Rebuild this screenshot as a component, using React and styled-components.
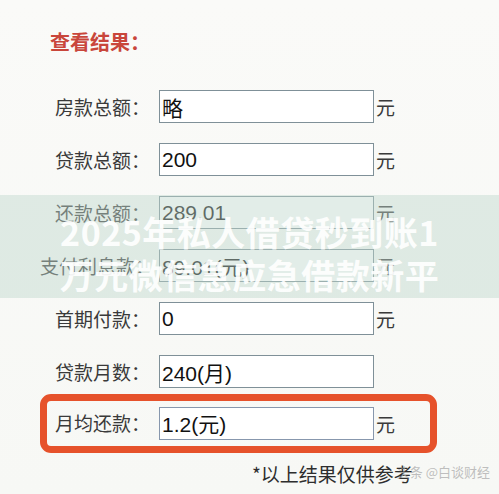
import React from "react";
import styled, { createGlobalStyle } from "styled-components";

const GlobalStyle = createGlobalStyle`
  html, body { margin: 0; padding: 0; background: #f8f8f6; }
  * { box-sizing: border-box; }
`;

const Page = styled.div`
  position: relative;
  width: 499px;
  height: 494px;
  overflow: hidden;
  background: linear-gradient(180deg, #fafaf8 0%, #f7f8f5 100%);
  font-family: "Noto Sans CJK SC", "Noto Sans", sans-serif;
  color: #333;
`;

const Title = styled.div`
  height: 80px;
  padding: 30px 0 0 50px;
  font-size: 20px;
  line-height: 24px;
  font-weight: 700;
  color: #c9463b;
`;

const Form = styled.div`
  display: flex;
  flex-direction: column;
`;

const Row = styled.div`
  display: flex;
  align-items: center;
  height: ${(p) => (p.$compact ? "45px" : "53px")};
  padding-left: ${(p) => (p.$compact ? "0px" : "40px")};
`;

const Label = styled.span`
  width: 119px;
  padding-right: 9px;
  text-align: right;
  font-size: 19px;
  line-height: 24px;
  color: #3a3a3a;
  white-space: nowrap;
`;

const Field = styled.div`
  width: 215px;
  height: 33px;
  border: 1.5px solid ${(p) => (p.$blue ? "#8797ad" : "#7f9098")};
  background: #fff;
  padding-left: 2px;
  display: flex;
  align-items: center;
  font-family: "Liberation Sans", "Noto Sans CJK SC", sans-serif;
  font-size: 21px;
  color: #111;
`;

const Unit = styled.span`
  margin-left: 2px;
  font-size: 19px;
  color: #3a3a3a;
`;

const Highlight = styled.div`
  margin: -4.5px 0 0 40px;
  width: 397px;
  height: 59px;
  border: 7px solid #e6522b;
  border-radius: 11px;
  display: flex;
  align-items: center;
`;

const Note = styled.div`
  margin: 9px 0 0 252px;
  font-size: 19px;
  line-height: 24px;
  color: #2e2e2e;
`;

const Band = styled.div`
  position: absolute;
  left: 0;
  right: 0;
  top: 195px;
  height: 103px;
  padding-top: 15px;
  background: rgba(190, 216, 205, 0.45);
  display: flex;
  flex-direction: column;
  align-items: center;
  color: rgba(255, 255, 255, 0.92);
  font-size: 34px;
  line-height: 43px;
  font-weight: 700;
  letter-spacing: 0.5px;
  pointer-events: none;
`;

const Mark = styled.div`
  position: absolute;
  right: 9px;
  top: 462px;
  font-size: 13px;
  color: rgba(175, 175, 175, 0.8);
`;

const rows = [
  { label: "房款总额：", value: "略", unit: "元" },
  { label: "贷款总额：", value: "200", unit: "元" },
  { label: "还款总额：", value: "289.01", unit: "元" },
  { label: "支付利息款：", value: "89.01(元)", unit: "元" },
  { label: "首期付款：", value: "0", unit: "元" },
  { label: "贷款月数：", value: "240(月)", unit: "" },
];

export default function App() {
  return (
    <>
      <GlobalStyle />
      <Page>
        <Title>查看结果：</Title>
        <Form>
          {rows.map((r) => (
            <Row key={r.label}>
              <Label>{r.label}</Label>
              <Field>{r.value}</Field>
              {r.unit && <Unit>{r.unit}</Unit>}
            </Row>
          ))}
          <Highlight>
            <Row $compact>
              <Label style={{ width: "112px" }}>月均还款：</Label>
              <Field $blue>1.2(元)</Field>
              <Unit>元</Unit>
            </Row>
          </Highlight>
          <Note>*以上结果仅供参考</Note>
        </Form>
        <Band>
          <span>2025年私人借贷秒到账1</span>
          <span>万元微信急应急借款新平</span>
        </Band>
        <Mark>头条 @白谈财经</Mark>
      </Page>
    </>
  );
}
